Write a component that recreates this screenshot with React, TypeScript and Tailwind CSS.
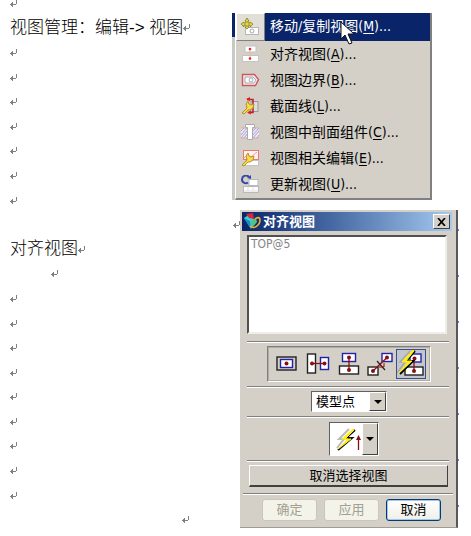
import type { ReactNode } from "react";

const uiFont =
  "font-['DejaVu_Sans_Condensed','Noto_Sans_CJK_SC',sans-serif]";

function ReturnMark() {
  return (
    <svg width="7" height="7" viewBox="0 0 7 7" shapeRendering="crispEdges" className="shrink-0" fill="#808080">
      <path d="M6 0h1v4h-1zM0 4h6v1h-6zM1 3h2v3h-2zM2 2h1v5h-1z" />
    </svg>
  );
}

function Line({ className = "pl-[10px]", children }: { className?: string; children?: ReactNode }) {
  return (
    <p className={`flex flex-1 items-center whitespace-pre ${className}`}>
      {children}
      <ReturnMark />
    </p>
  );
}

function Wrench() {
  return (
    <path
      d="M1 16l5-5-1-4 2-3 1 3 2 1 3-1-1 4-3 2-2 0-4 4z"
      fill="#f6dc4c"
      stroke="#b89020"
      strokeWidth="1"
    />
  );
}

const menuIcons: ReactNode[] = [
  <>
    <rect x="4.5" y="9.5" width="13" height="7" fill="#fff" stroke="#b8b8b8" />
    <circle cx="11" cy="13" r="2" fill="#fff" stroke="#aaa" />
    <path d="M6 0l2 3h-1v2h2V4l3 2-3 3V7H7v2h1l-2 2-2-2h1V7H3v2L0 6l3-2v1h2V3H4z" fill="#e6d838" stroke="#77701c" strokeWidth=".7" />
  </>,
  <>
    <rect x="4" y="1" width="11" height="6" fill="#fff" stroke="#c4c4c4" />
    <rect x="1.5" y="10.5" width="16" height="6" fill="#fff" stroke="#c4c4c4" />
    <path d="M9 3v12" stroke="#e8b0b0" />
    <circle cx="9" cy="4" r="1.3" fill="#e02828" />
    <circle cx="9" cy="13.5" r="1.3" fill="#e02828" />
  </>,
  <>
    <path d="M1.5 3.5h12l4 5-3 6h-13z" fill="#eee" stroke="#cf5560" strokeWidth="1.4" />
    <path d="M4 6h8l3 3-2 3H4z" fill="#fff" stroke="#a8a8a8" />
    <circle cx="10" cy="9" r="2" fill="#fff" stroke="#aaa" />
  </>,
  <>
    <rect x="10" y="4.5" width="7" height="10" fill="#ddd" stroke="#999" />
    <path d="M6 2.5h6v13h-5" fill="none" stroke="#b82030" strokeWidth="1.5" />
    <path d="M5 2l4-2v4zM6 15.500l4-2v4z" fill="#e02020" />
    <Wrench />
  </>,
  <>
    <rect x="0" y="5" width="18" height="10" fill="#f3e4ee" />
    <path d="M0 8l3-3M0 12l6-7M0 15l7-8M3 15l4-5M11 9l4-4M11 13l7-8M12 15l6-7M16 15l2-3" stroke="#88a4da" strokeWidth=".9" />
    <path d="M0 5h6M12 5h6M0 15h6M12 15h6" stroke="#e5a0a8" />
    <path d="M4.5 1.5h9v3h-2v12h-5v-12h-2z" fill="#fff" stroke="#aaa" />
  </>,
  <>
    <rect x="2.5" y="1.5" width="15" height="9" fill="#fff1f0" stroke="#ec7777" />
    <path d="M3 9l3-3 4 2 6-5" stroke="#e5a0a0" fill="none" />
    <rect x="4.5" y="11.5" width="13" height="5" fill="#fff" stroke="#c4c4c4" />
    <Wrench />
  </>,
  <>
    <rect x="8" y="4.5" width="9" height="6" fill="#fff" stroke="#b8b8c0" />
    <rect x="2.5" y="11.5" width="15" height="6" fill="#fff" stroke="#b8b8c0" />
    <path d="M3 16h14M7 12v4M12 12v4" stroke="#ddd" />
    <path d="M8 2C5-1 1 1 1 4.500S5 9 7 7.500" fill="none" stroke="#3348a8" strokeWidth="2" />
    <path d="M6 3l4 1V0z" fill="#3348a8" />
  </>,
];

const menuItems = [
  ["移动/复制视图", "M"],
  ["对齐视图", "A"],
  ["视图边界", "B"],
  ["截面线", "L"],
  ["视图中剖面组件", "C"],
  ["视图相关编辑", "E"],
  ["更新视图", "U"],
];

function ViewMenu() {
  return (
    <div className="relative flex w-[200px]">
      <div className="flex w-[3px] flex-col bg-[#c8c8c4]">
        <div className="h-6 bg-[#0a246a]" />
      </div>
      <div role="menu" className="flex-1 border-r-2 border-b-2 border-l border-r-[#808080] border-b-[#808080] border-l-white bg-[#d4d0c8] pb-px">
        {menuItems.map(([label, key], i) => (
          <button
            key={key}
            role="menuitem"
            className={`flex w-full items-stretch text-left text-[14px] leading-[26px] whitespace-nowrap ${i === 0 ? "h-7 text-white" : "h-[26px] text-black"}`}
          >
            <span
              className={`flex w-[29px] shrink-0 items-center justify-center ${i === 0 ? "border border-t-white border-r-[#808080] border-b-[#808080] border-l-white bg-[#e2dfd9]" : ""}`}
            >
              <svg width="19" height="18" viewBox="0 0 19 18">{menuIcons[i]}</svg>
            </span>
            <span className={`flex-1 pl-[5px] ${i === 0 ? "bg-[#0a246a]" : ""}`}>
              {label}(<u className="underline-offset-2">{key}</u>)...
            </span>
          </button>
        ))}
      </div>
      <svg width="15" height="26" viewBox="0 0 15 26" className="absolute top-[8px] left-[108px]">
        <path d="M1 1v17l4-4 4 9 3-1-4-9h6z" fill="#fff" stroke="#111" strokeWidth="1" />
      </svg>
    </div>
  );
}

function Rule({ className }: { className: string }) {
  return <hr className={`h-[2px] border-0 border-t border-b border-t-[#808080] border-b-white ${className}`} />;
}

function Dot({ x, y }: { x: number; y: number }) {
  return <circle cx={x} cy={y} r="2" fill="#8a0d14" />;
}

const black = { fill: "#fff", stroke: "#222", strokeWidth: 1.4 };
const blue = { fill: "#fff", stroke: "#2222a8", strokeWidth: 1.4 };

const alignTools: { name: string; icon: ReactNode }[] = [
  {
    name: "叠加",
    icon: (
      <>
        <rect x="4" y="7" width="19" height="13" {...black} fill="#d4d0c8" />
        <rect x="7.5" y="9.5" width="12" height="8" {...blue} />
        <Dot x={13.5} y={13.5} />
      </>
    ),
  },
  {
    name: "水平",
    icon: (
      <>
        <rect x="3.5" y="4" width="8" height="19" {...black} />
        <rect x="16.5" y="7.5" width="8" height="12" {...blue} />
        <path d="M8 13.5h13" stroke="#8a0d14" strokeWidth="1.3" />
        <Dot x={8} y={13.5} />
        <Dot x={20.5} y={13.5} />
      </>
    ),
  },
  {
    name: "竖直",
    icon: (
      <>
        <rect x="7.5" y="3.5" width="13" height="8" {...blue} />
        <rect x="4.5" y="16" width="19" height="8" {...black} />
        <path d="M14 8v12" stroke="#8a0d14" strokeWidth="1.3" />
        <Dot x={14} y={7.5} />
        <Dot x={14} y={20} />
      </>
    ),
  },
  {
    name: "垂直于直线",
    icon: (
      <>
        <rect x="16" y="3.5" width="10" height="8" {...blue} />
        <rect x="2" y="17" width="10" height="8" {...black} />
        <path d="M7 21L21 7.5" stroke="#8a0d14" strokeWidth="1.3" />
        <path d="M11 11l8 9" stroke="#222" strokeWidth="1.2" />
        <path d="M13 17h5v-4" stroke="#8a0d14" fill="none" />
        <Dot x={7} y={21} />
        <Dot x={21} y={7.5} />
      </>
    ),
  },
  {
    name: "自动判断",
    icon: (
      <>
        <rect x="13" y="4" width="11" height="8" {...blue} />
        <rect x="8" y="17" width="18" height="8" {...black} />
        <path d="M17 9v12" stroke="#8a0d14" strokeWidth="1.3" />
        <Dot x={17.5} y={8.5} />
        <Dot x={17} y={21} />
        <path d="M13 1L3 12h5L0 23" fill="none" stroke="#a8a8a8" strokeWidth="1.5" />
        <path d="M18 1L9 11h7L3 24" fill="none" stroke="#000" strokeWidth="2" />
        <path d="M16 0L5 12h6L1 24l14-13H9l8-10z" fill="#ffee19" stroke="#ffee19" strokeWidth="1" />
      </>
    ),
  },
];

function DownArrow() {
  return (
    <svg width="8" height="4" viewBox="0 0 8 4">
      <path d="M0 0h8L4 4z" fill="#000" />
    </svg>
  );
}

const sunken = "border border-t-[#606060] border-r-white border-b-white border-l-[#606060]";
const raised = "border border-t-white border-r-[#404040] border-b-[#404040] border-l-white";

function AlignDialog() {
  return (
    <div className="relative ml-2 w-[218px]">
      <section
        aria-label="对齐视图"
        className="border-r-2 border-r-[#58585c] border-b border-b-[#a09c94] bg-[#d4d0c8] px-[2px] pt-[2px] pb-[6px] text-[12px]"
      >
        <header className="mr-[2px] flex h-[19px] items-center bg-linear-to-r from-[#0a246a] to-[#a6caf0] pr-[2px] pl-[2px]">
          <svg width="17" height="17" viewBox="0 0 17 17">
            <path d="M0 5l6-4 5 7-4 8z" fill="#35cfe0" />
            <path d="M0 5l6 3 1 8z" fill="#1590b8" />
            <path d="M2 1l7-1 1 6-5-1z" fill="#dc2438" />
            <path d="M7 8l5-3 1 4-5 6z" fill="#58c080" />
            <path d="M6 13c4 4 10-1 10-6 0-3-3-3-5-1" fill="none" stroke="#f6ac28" strokeWidth="1.6" />
          </svg>
          <h2 className="flex-1 pl-[2px] text-[13px] leading-[19px] font-bold text-white">对齐视图</h2>
          <button aria-label="关闭" className={`flex h-[15px] w-[17px] items-center justify-center bg-[#d4d0c8] ${raised}`}>
            <svg width="9" height="8" viewBox="0 0 9 8">
              <path d="M1 0l7 8M8 0L1 8" stroke="#000" strokeWidth="1.7" />
            </svg>
          </button>
        </header>

        <select
          aria-label="视图列表"
          size={4}
          className="mt-[4px] ml-[5px] block h-[99px] w-[200px] appearance-none overflow-hidden border-2 border-t-[#505050] border-r-[#efede8] border-b-[#efede8] border-l-[#505050] bg-white text-[12px] text-[#848484] outline-none"
        >
          <option className="min-h-0 p-0 px-[2px] leading-[16px] text-[#848484]">TOP@5</option>
        </select>

        <Rule className="mx-[5px] mt-[7px]" />

        <div
          role="toolbar"
          aria-label="对齐方式"
          className="mt-[3px] ml-[25px] flex h-9 w-[164px] items-center justify-center gap-px border border-t-[#808080] border-r-white border-b-white border-l-[#808080] outline-1 -outline-offset-2 outline-[#b0aca4]"
        >
          {alignTools.map(({ name, icon }, i) => (
            <button
              key={name}
              aria-label={name}
              aria-pressed={i === 4}
              className={`flex size-[30px] items-center justify-center border ${i === 4 ? "border-[#35508c] bg-[#c5c6cc]" : "border-transparent"}`}
            >
              <svg width="28" height="28" viewBox="0 0 28 28" className="shrink-0">{icon}</svg>
            </button>
          ))}
        </div>

        <Rule className="mx-[5px] mt-[4px]" />

        <div className={`mt-[3px] ml-[69px] grid h-[21px] w-[76px] bg-white ${sunken}`}>
          <select
            aria-label="对齐点"
            className="col-start-1 row-start-1 h-full w-full appearance-none pl-[4px] text-[13px] leading-[18px] text-black outline-none"
          >
            <option>模型点</option>
          </select>
          <span className={`pointer-events-none col-start-1 row-start-1 flex w-[17px] items-center justify-center justify-self-end bg-[#d4d0c8] ${raised}`}>
            <DownArrow />
          </span>
        </div>

        <Rule className="mx-[5px] mt-[4px]" />

        <button aria-label="矢量构造器" aria-haspopup="menu" className={`mt-[4px] ml-[87px] flex h-[34px] w-[50px] bg-white ${sunken}`}>
          <span className="flex flex-1 items-center justify-center">
            <svg width="31" height="30" viewBox="0 0 31 30">
              <path d="M18 5L8 15h5L6 24" fill="none" stroke="#bbb" strokeWidth="2" />
              <path d="M24 6l-9 8h6L7 26" fill="none" stroke="#111" strokeWidth="2" />
              <path d="M22 5L11 15h6L7 25l13-10h-6l9-9z" fill="#ffee19" stroke="#ffee19" strokeWidth="1" />
              <path d="M27.5 26V13" stroke="#8a0d14" strokeWidth="1.3" />
              <path d="M25 16l2.5-5 2.500 5z" fill="#8a0d14" />
            </svg>
          </span>
          <span className={`flex h-full w-[16px] items-center justify-center bg-[#d4d0c8] ${raised}`}>
            <DownArrow />
          </span>
        </button>

        <Rule className="mx-[5px] mt-[4px]" />

        <button className={`mt-[3px] ml-[7px] block h-[22px] w-[199px] border-b-2 bg-[#d4d0c8] text-center text-[13px] leading-[18px] text-black ${raised}`}>
          取消选择视图
        </button>

        <Rule className="mx-px mt-[6px]" />

        <div className="mt-[4px] mr-[13px] flex justify-end gap-[7px] text-[13px] leading-[18px]">
          {["确定", "应用"].map((t) => (
            <button key={t} disabled className="h-[22px] w-[55px] rounded-[3px] border border-[#c9c7ba] bg-[#f4f3ea] text-[#a1a192]">
              {t}
            </button>
          ))}
          <button className="h-[22px] w-[55px] rounded-[3px] border border-[#003c74] bg-linear-to-b from-white to-[#f0efe8] text-black inset-ring-1 inset-ring-[#a9c4ec]">
            取消
          </button>
        </div>
      </section>
      <div className="absolute top-[19px] -right-px flex flex-col gap-[44px]">
        {[0, 1, 2, 3, 4, 5, 6].map((n) => (
          <i key={n} className="block h-[2px] w-px bg-[#6080e0]" />
        ))}
      </div>
    </div>
  );
}

export default function App() {
  return (
    <main className={`flex items-start overflow-hidden bg-white ${uiFont}`}>
      <article className="-mt-[9px] flex h-[541px] w-[232px] shrink-0 flex-col font-['Liberation_Sans','Noto_Sans_CJK_SC',sans-serif] text-[17px] leading-[24px] font-light text-black">
        <Line />
        <Line>视图管理：编辑-&gt; 视图</Line>
        {[0, 1, 2, 3, 4, 5, 6].map((n) => (
          <Line key={n} />
        ))}
        <Line className="pl-[233px]" />
        <Line>对齐视图</Line>
        <Line className="pl-[51px]" />
        {[0, 1, 2, 3, 4, 5, 6, 7, 8].map((n) => (
          <Line key={n} />
        ))}
        <Line className="pl-[182px]" />
      </article>
      <div className="flex flex-col gap-[10px] pt-[13px]">
        <ViewMenu />
        <AlignDialog />
      </div>
    </main>
  );
}
